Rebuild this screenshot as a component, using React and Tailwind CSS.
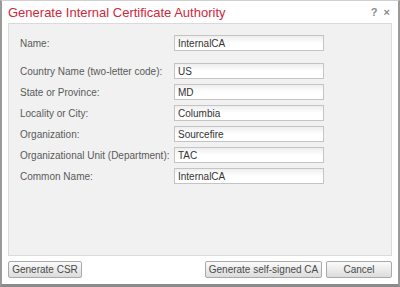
import React from "react";

const fields = [
    { label: "Name:", value: "InternalCA", gap: true },
    { label: "Country Name (two-letter code):", value: "US" },
    { label: "State or Province:", value: "MD" },
    { label: "Locality or City:", value: "Columbia" },
    { label: "Organization:", value: "Sourcefire" },
    { label: "Organizational Unit (Department):", value: "TAC" },
    { label: "Common Name:", value: "InternalCA" },
];

function Btn({ children, className = "" }) {
    return (
        <button
            className={
                "h-[17px] rounded-[2px] border border-[#a9a9a9] bg-gradient-to-b from-[#fbfbfb] to-[#dcdcdc] text-[10px] text-[#4a4a4a] leading-none " +
                className
            }
        >
            {children}
        </button>
    );
}

export default function App() {
    return (
        <div
            className="w-[400px] h-[287px] bg-white border-x-2 border-b-[3px] border-t border-x-[#9a9a9a] border-b-[#8a8a8a] border-t-[#d0d0d0] flex flex-col"
            style={{ fontFamily: "'Liberation Sans', Arial, sans-serif" }}
        >
            {/* ── header ───────────────────────────── */}
            <div className="flex items-center justify-between h-[22px] pl-[6px] pr-[8px] pt-[1px]">
                <span className="text-[13px] text-[#d0273c]">
                    Generate Internal Certificate Authority
                </span>
                <span className="text-[11px] text-[#8a8a8a] font-bold flex gap-[6px]">
                    <span>?</span>
                    <span>×</span>
                </span>
            </div>

            {/* ── form panel ───────────────────────── */}
            <div className="mx-[6px] h-[233px] bg-[#f1f1f1] border border-[#dadada] pt-[11px] pl-[11px]">
                {fields.map((f, i) => (
                    <div
                        key={i}
                        className={"flex items-center h-[16px] " + (f.gap ? "mb-[12px]" : "mb-[5px]")}
                    >
                        <span className="w-[154px] text-[10px] text-[#5a5a5a]">{f.label}</span>
                        <div className="w-[150px] h-[16px] border border-[#c4c4c4] bg-gradient-to-b from-[#eeeeee] via-white to-white flex items-center pl-[3px] text-[10px] text-[#333]">
                            {f.value}
                        </div>
                    </div>
                ))}
            </div>

            {/* ── footer buttons ───────────────────── */}
            <div className="flex items-center px-[6px] pt-[5px]">
                <Btn className="w-[74px]">Generate CSR</Btn>
                <div className="flex-1" />
                <Btn className="w-[117px] mr-[4px]">Generate self-signed CA</Btn>
                <Btn className="w-[66px]">Cancel</Btn>
            </div>
        </div>
    );
}
